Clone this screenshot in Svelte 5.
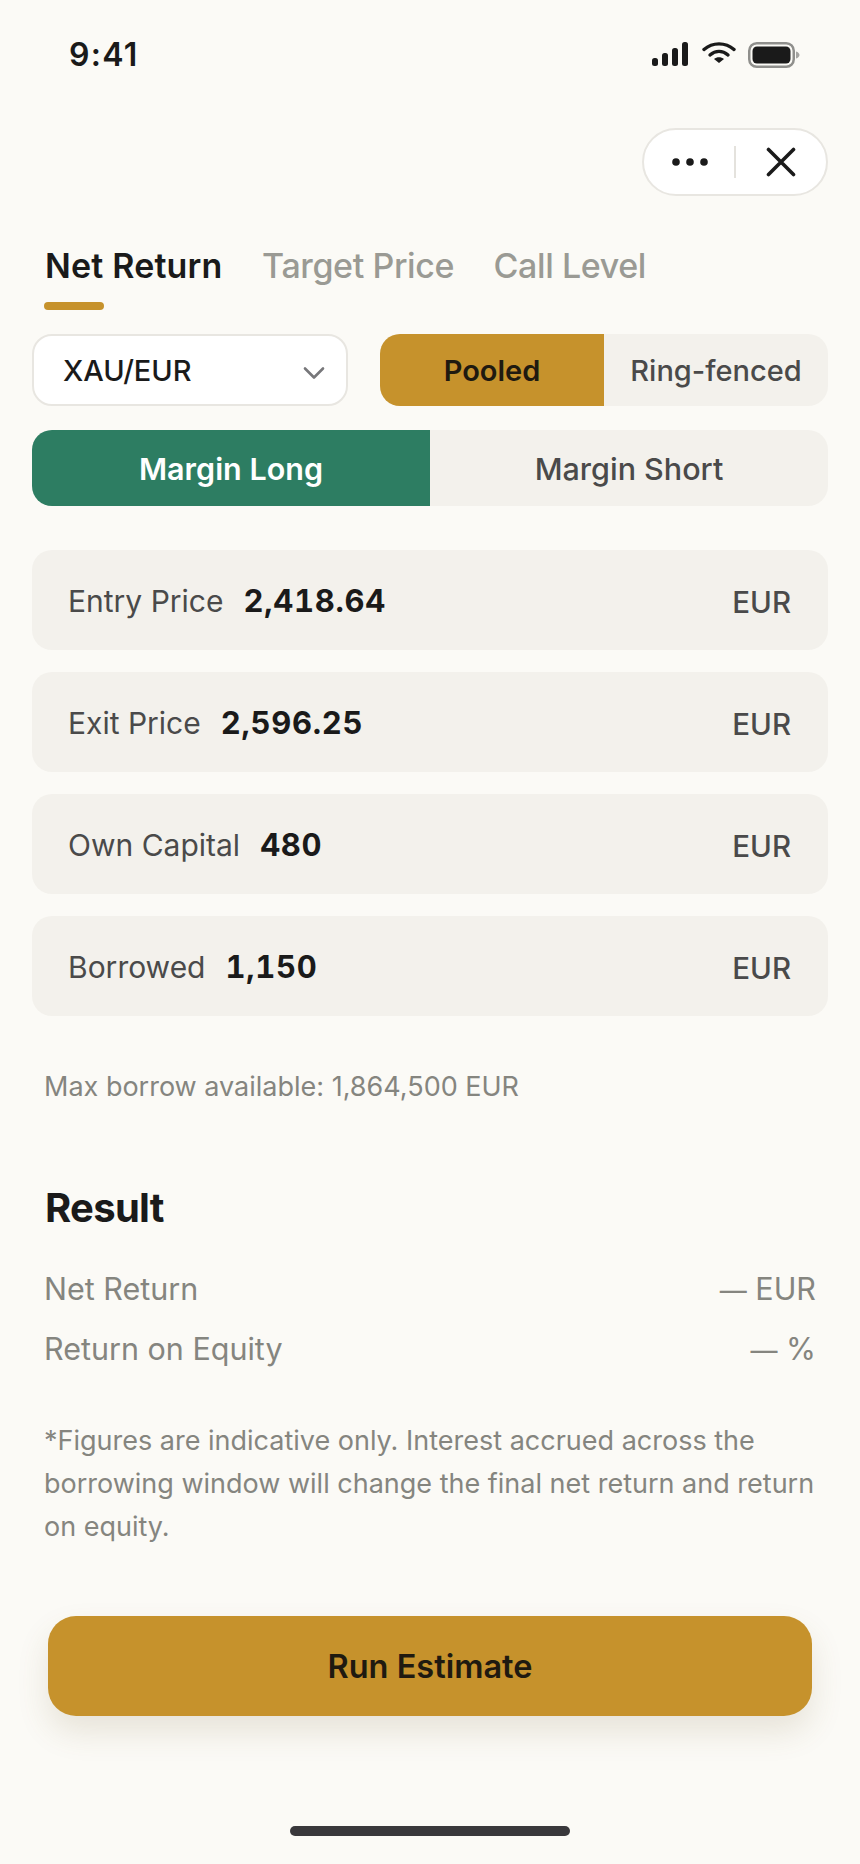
<script>
  const fields = [
    { label: 'Entry Price', value: '2,418.64' },
    { label: 'Exit Price', value: '2,596.25' },
    { label: 'Own Capital', value: '480' },
    { label: 'Borrowed', value: '1,150' }
  ];
</script>

<div class="page">
  <header class="status">
    <span class="time">9:41</span>
    <div class="status-icons">
      <svg width="36" height="24" viewBox="0 0 36 24" class="sig">
        <rect x="0" y="16" width="6" height="8" rx="2.5" fill="#1a1a1a"/>
        <rect x="10" y="11" width="6" height="13" rx="2.5" fill="#1a1a1a"/>
        <rect x="20" y="6" width="6" height="18" rx="2.5" fill="#1a1a1a"/>
        <rect x="30" y="0" width="6" height="24" rx="2.5" fill="#1a1a1a"/>
      </svg>
      <svg width="34" height="22" viewBox="0 0 34 22" class="wifi">
        <path d="M2 8.5C10.5 1 23.5 1 32 8.5" fill="none" stroke="#1a1a1a" stroke-width="3.4" stroke-linecap="round"/>
        <path d="M8 14C13.5 9.2 20.5 9.2 26 14" fill="none" stroke="#1a1a1a" stroke-width="3.4" stroke-linecap="round"/>
        <path d="M12 18C14.8 15.6 19.2 15.6 22 18L17 22Z" fill="#1a1a1a"/>
      </svg>
      <svg width="52" height="26" viewBox="0 0 52 26" class="batt">
        <rect x="1.25" y="1.25" width="44.5" height="23.5" rx="7.5" fill="none" stroke="#8f8f8c" stroke-width="2.5"/>
        <rect x="4.5" y="4.5" width="38" height="17" rx="4.5" fill="#1a1a1a"/>
        <path d="M48 9.5C50.2 10.2 51.5 11.4 51.5 13S50.2 15.8 48 16.5Z" fill="#a5a5a2"/>
      </svg>
    </div>
  </header>

  <div class="capsule-row">
    <div class="capsule">
      <svg width="36" height="10" viewBox="0 0 36 10" class="dots">
        <circle cx="4" cy="5" r="3.8" fill="#1a1a1a"/>
        <circle cx="18" cy="5" r="3.8" fill="#1a1a1a"/>
        <circle cx="32" cy="5" r="3.8" fill="#1a1a1a"/>
      </svg>
      <span class="cap-sep"></span>
      <svg width="30" height="30" viewBox="0 0 30 30" class="close">
        <path d="M2.5 2.5L27.5 27.5M27.5 2.5L2.5 27.5" stroke="#1a1a1a" stroke-width="3.6" stroke-linecap="round"/>
      </svg>
    </div>
  </div>

  <nav class="tabs">
    <div class="tab active">Net Return<span class="underline"></span></div>
    <div class="tab">Target Price</div>
    <div class="tab">Call Level</div>
  </nav>

  <div class="controls">
    <div class="select">
      <span>XAU/EUR</span>
      <svg width="22" height="14" viewBox="0 0 22 14">
        <path d="M2 2.5L11 11.5L20 2.5" fill="none" stroke="#77777a" stroke-width="2.6" stroke-linecap="round" stroke-linejoin="round"/>
      </svg>
    </div>
    <div class="seg-small">
      <div class="seg-a">Pooled</div>
      <div class="seg-b">Ring-fenced</div>
    </div>
  </div>

  <div class="direction">
    <div class="dir-a">Margin Long</div>
    <div class="dir-b">Margin Short</div>
  </div>

  <div class="fields">
    {#each fields as f}
      <div class="field">
        <span class="f-label">{f.label}</span>
        <span class="f-value">{f.value}</span>
        <span class="f-unit">EUR</span>
      </div>
    {/each}
  </div>

  <p class="hint">Max borrow available: 1,864,500 EUR</p>

  <h2 class="result-title">Result</h2>
  <div class="result-row"><span>Net Return</span><span><span class="em">—</span> EUR</span></div>
  <div class="result-row second"><span>Return on Equity</span><span><span class="em">—</span> %</span></div>

  <p class="note">*Figures are indicative only. Interest accrued across the borrowing window will change the final net return and return on equity.</p>

  <button class="cta">Run Estimate</button>

  <div class="home"></div>
</div>

<style>
  :global(body) {
    margin: 0;
    background: #fbfaf6;
  }
  .page {
    width: 860px;
    height: 1864px;
    box-sizing: border-box;
    background: #fbfaf6;
    font-family: Inter, "Liberation Sans", sans-serif;
    color: #1a1a1a;
    overflow: hidden;
  }
  .status {
    height: 108px;
    padding: 37px 28px 0 69px;
    box-sizing: border-box;
    display: flex;
    justify-content: space-between;
    align-items: flex-start;
  }
  .time {
    font-size: 32px;
    font-weight: 600;
    line-height: 36px;
    letter-spacing: 1.3px;
  }
  .status-icons {
    display: flex;
    align-items: flex-start;
    gap: 14px;
    padding-right: 32px;
    margin-top: -1px;
  }
  .sig { margin-top: 6px; }
  .wifi { margin-top: 5px; }
  .batt { margin-top: 6px; margin-left: -2px; }
  .capsule-row {
    display: flex;
    justify-content: flex-end;
    padding: 20px 32px 0 0;
  }
  .capsule {
    width: 186px;
    height: 68px;
    box-sizing: border-box;
    background: #fff;
    border: 2px solid #e8e6e1;
    border-radius: 34px;
    display: flex;
    align-items: center;
    padding-left: 28px;
  }
  .cap-sep {
    width: 1.5px;
    height: 32px;
    background: #e4e2dd;
    margin-left: 26px;
    margin-right: 30px;
  }
  .tabs {
    display: flex;
    gap: 39.5px;
    padding: 48px 0 0 45px;
  }
  .tab {
    position: relative;
    font-size: 34px;
    font-weight: 500;
    line-height: 44px;
    color: #9a9a94;
    letter-spacing: -0.4px;
  }
  .tab.active {
    font-weight: 600;
    color: #1a1a1a;
    letter-spacing: 0.18px;
  }
  .underline {
    position: absolute;
    left: -1px;
    top: 58px;
    width: 60px;
    height: 8px;
    border-radius: 4px;
    background: #c6922c;
  }
  .controls {
    display: flex;
    justify-content: space-between;
    padding: 46px 32px 0 32px;
  }
  .select {
    width: 316px;
    height: 72px;
    box-sizing: border-box;
    background: #fff;
    border: 2px solid #e8e6e1;
    border-radius: 20px;
    display: flex;
    align-items: center;
    justify-content: space-between;
    padding: 1px 21px 0 29px;
    font-size: 29px;
    font-weight: 500;
  }
  .select svg { margin-top: 4px; }
  .seg-small {
    width: 448px;
    height: 72px;
    border-radius: 20px;
    overflow: hidden;
    background: #f3f1ec;
    display: flex;
    font-size: 29px;
    font-weight: 500;
  }
  .seg-a {
    width: 224px;
    background: #c6922c;
    color: #1f1a10;
    font-weight: 600;
    display: flex;
    align-items: center;
    justify-content: center;
  }
  .seg-b {
    flex: 1;
    color: #4a4a4a;
    display: flex;
    align-items: center;
    justify-content: center;
  }
  .direction {
    margin: 24px 32px 0;
    height: 76px;
    display: flex;
    border-radius: 20px;
    overflow: hidden;
    background: #f3f1ec;
    font-size: 30.5px;
    font-weight: 600;
  }
  .dir-a {
    width: 398px;
    background: #2d7d62;
    color: #fff;
    display: flex;
    align-items: center;
    justify-content: center;
  }
  .dir-b {
    flex: 1;
    color: #4a4a4a;
    font-weight: 500;
    display: flex;
    align-items: center;
    justify-content: center;
  }
  .fields {
    margin: 44px 32px 0;
    display: flex;
    flex-direction: column;
    gap: 22px;
  }
  .field {
    height: 100px;
    box-sizing: border-box;
    border-radius: 20px;
    background: #f3f1ec;
    display: flex;
    align-items: center;
    padding: 1px 36px 0;
  }
  .f-label {
    font-size: 30px;
    color: #4a4a4a;
    font-weight: 400;
  }
  .f-value {
    font-size: 31px;
    font-weight: 700;
    margin-left: 20px;
    letter-spacing: 0.7px;
    font-variant-numeric: tabular-nums;
  }
  .f-unit {
    margin-left: auto;
    font-size: 29.5px;
    font-weight: 500;
    color: #4a4a4a;
    margin-top: 2px;
    margin-right: 1px;
  }
  .hint {
    margin: 53px 0 0 44px;
    font-size: 27px;
    line-height: 36px;
    color: #85857f;
  }
  .result-title {
    margin: 81px 0 0 45px;
    font-size: 40px;
    line-height: 44px;
    font-weight: 700;
    letter-spacing: -0.7px;
  }
  .result-row {
    margin: 38px 44px 0 44px;
    display: flex;
    justify-content: space-between;
    font-size: 30.5px;
    line-height: 40px;
    color: #85857f;
    padding-top: 1px;
  }
  .result-row.second {
    margin-top: 19px;
  }
  .em {
    font-size: 27px;
    line-height: 0;
  }
  .note {
    margin: 50px 44px 0 44px;
    font-size: 27px;
    line-height: 43px;
    color: #85857f;
  }
  .cta {
    display: block;
    margin: 68px 48px 0;
    width: 764px;
    height: 100px;
    border: 0;
    border-radius: 28px;
    background: #c6922c;
    color: #1f1a10;
    font-family: inherit;
    font-size: 32.5px;
    font-weight: 600;
    box-shadow: 0 16px 32px rgba(110, 90, 40, 0.14);
  }
  .home {
    margin: 110px auto 0;
    width: 280px;
    height: 10px;
    border-radius: 5px;
    background: #39383b;
  }
</style>
